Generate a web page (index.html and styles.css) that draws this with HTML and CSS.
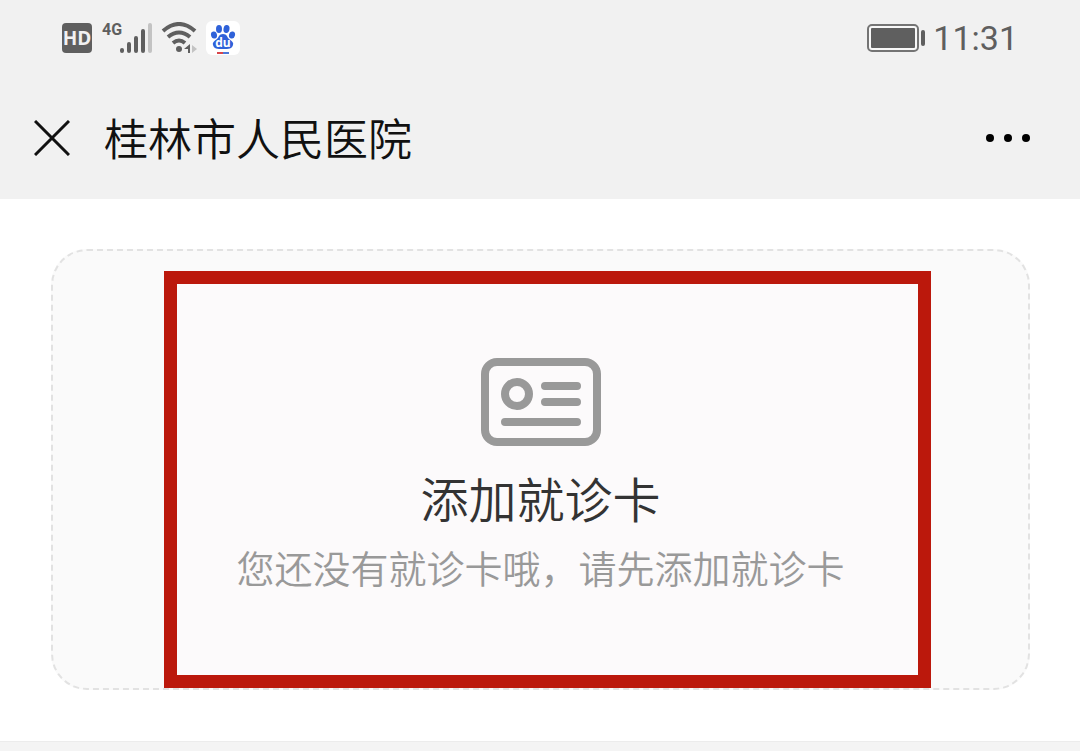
FILE: index.html
```html
<!DOCTYPE html>
<html lang="zh-CN">
<head>
    <meta charset="UTF-8">
    <meta name="viewport" content="width=device-width, initial-scale=1.0">
    <title>桂林市人民医院</title>
    <link rel="stylesheet" href="styles.css">
</head>
<body>
    <header class="header">
        <div class="status-bar">
            <div class="status-left">
                <span class="hd">HD</span>
                <div class="signal">
                    <span class="network">4G</span>
                    <svg width="34" height="32" viewBox="0 0 34 32" fill="none" stroke="#5f5f5f" stroke-width="4" stroke-linecap="round" aria-hidden="true">
                        <path d="M4 28v1M11 22v7M18 16v13M25 9v20"/>
                        <path d="M32 3v26" stroke="#c3c3c3"/>
                    </svg>
                </div>
                <svg class="wifi" width="38" height="32" viewBox="0 0 38 32" fill="none" stroke="#5f5f5f" stroke-width="4" stroke-linecap="round" aria-hidden="true">
                    <path d="M3 9Q19-5 35 9M8 15Q19 6 30 15M13 21Q19 16 25 21" stroke-linecap="butt"/>
                    <circle cx="19" cy="27" r="3" fill="#5f5f5f" stroke="none"/>
                    <path d="M24 27l6-5v9h-2v-4z" fill="#5f5f5f" stroke="none"/>
                    <path d="M32 23l5 4-5 4z" fill="#c3c3c3" stroke="none"/>
                </svg>
                <svg class="baidu" width="34" height="34" viewBox="0 0 34 34" aria-hidden="true">
                    <rect width="34" height="34" rx="6" fill="#fff"/>
                    <g fill="#2f62d9">
                        <ellipse cx="8" cy="14" rx="3" ry="3.600" transform="rotate(-12 8 14)"/>
                        <ellipse cx="13" cy="8" rx="3" ry="4"/>
                        <ellipse cx="20.500" cy="8" rx="3" ry="4" transform="rotate(10 20.500 8)"/>
                        <ellipse cx="26" cy="14" rx="3" ry="3.600" transform="rotate(15 26 14)"/>
                        <path d="M17 13c4 0 4 3 6 5 3 2 5 4 4 6-1 4-4 4-10 4s-9 0-10-4c-1-2 1-4 4-6 2-2 2-5 6-5z"/>
                    </g>
                    <text x="17" y="26" class="baidu-text">du</text>
                    <path d="M11 32h6" stroke="#d8464b" stroke-width="2"/>
                    <path d="M17 32h6" stroke="#4c78d8" stroke-width="2"/>
                </svg>
            </div>
            <div class="status-right">
                <svg width="58" height="28" viewBox="0 0 58 28" aria-hidden="true">
                    <rect x="1" y="1" width="50" height="26" rx="4" fill="#f8f8f8" stroke="#747474" stroke-width="2"/>
                    <rect x="4" y="4" width="44" height="20" rx="1" fill="#5f5f5f"/>
                    <rect x="54" y="6" width="4" height="16" rx="2" fill="#5f5f5f"/>
                </svg>
                <time>11:31</time>
            </div>
        </div>
        <nav class="nav-bar">
            <button class="icon-btn" type="button" aria-label="关闭">
                <svg width="36" height="36" viewBox="0 0 36 36" stroke="#111" stroke-width="3" aria-hidden="true">
                    <path d="M1 1l34 34M35 1L1 35"/>
                </svg>
            </button>
            <h1>桂林市人民医院</h1>
            <button class="icon-btn" type="button" aria-label="更多">
                <svg width="46" height="10" viewBox="0 0 46 10" aria-hidden="true">
                    <circle cx="5" cy="5" r="4"/>
                    <circle cx="23" cy="5" r="4"/>
                    <circle cx="41" cy="5" r="4"/>
                </svg>
            </button>
        </nav>
    </header>

    <main class="content">
        <button class="add-card" type="button">
            <span class="highlight"></span>
            <svg class="card-icon" width="120" height="88" viewBox="0 0 120 88" fill="none" stroke="#999" stroke-width="8" stroke-linecap="round" aria-hidden="true">
                <rect x="4" y="4" width="112" height="80" rx="12"/>
                <circle cx="36" cy="36" r="12"/>
                <path d="M64 28h32M64 44h32M24 64h72"/>
            </svg>
            <span class="card-title">添加就诊卡</span>
            <span class="card-tip">您还没有就诊卡哦，请先添加就诊卡</span>
        </button>
    </main>
    <div class="divider"></div>
</body>
</html>
```
FILE: styles.css
```css
* {
    box-sizing: border-box;
}
body {
    margin: 0;
    min-height: 100vh;
    display: flex;
    flex-direction: column;
    background-color: #fff;
    font-family: Roboto, "Noto Sans CJK SC", sans-serif;
}
button {
    font-family: inherit;
    cursor: pointer;
}
svg {
    display: block;
}
.header {
    background-color: #f1f1f1;
}
.status-bar {
    display: flex;
    justify-content: space-between;
    align-items: center;
    height: 76px;
    padding: 0 62px;
    color: #5f5f5f;
}
.status-left,
.status-right {
    display: flex;
    align-items: center;
}
.hd {
    width: 30px;
    border-radius: 4px;
    background-color: #5f5f5f;
    color: #f1f1f1;
    font-family: "Open Sans", sans-serif;
    font-size: 19px;
    font-weight: bold;
    line-height: 30px;
    text-align: center;
}
.signal {
    display: flex;
    margin-left: 10px;
}
.network {
    width: 16px;
    font-size: 16px;
    font-weight: bold;
    line-height: 16px;
}
.wifi,
.baidu {
    margin-left: 8px;
}
.baidu-text {
    fill: #fff;
    font-family: "Open Sans", sans-serif;
    font-size: 12px;
    font-weight: bold;
    text-anchor: middle;
}
.status-right {
    gap: 8px;
    font-size: 34px;
    line-height: 40px;
}
.nav-bar {
    display: flex;
    align-items: center;
    gap: 34px;
    height: 123px;
    padding: 0 49px 0 34px;
}
.nav-bar h1 {
    flex: 1;
    margin: 0;
    padding-top: 6px;
    color: #111;
    font-size: 44px;
    font-weight: 350;
    line-height: 64px;
}
.icon-btn {
    padding: 0;
    border: none;
    background: none;
}
.content {
    flex: 1;
    padding: 50px 50px 50px 51px;
}
.add-card {
    position: relative;
    display: flex;
    flex-direction: column;
    align-items: center;
    width: 100%;
    padding: 107px 0 86px;
    border: 2px dashed #e2e2e2;
    border-radius: 36px;
    background-color: #fafafa;
}
.highlight {
    position: absolute;
    top: 20px;
    right: 97px;
    bottom: 0;
    left: 111px;
    border: 13px solid #bb180c;
    background-color: #fcfafb;
}
.card-icon,
.card-title,
.card-tip {
    position: relative;
}
.card-title {
    margin-top: 20px;
    color: #333;
    font-size: 48px;
    font-weight: 350;
    line-height: 72px;
}
.card-tip {
    color: #999;
    font-size: 38px;
    font-weight: 350;
    line-height: 64px;
}
.divider {
    height: 10px;
    border-top: 1px solid #ececec;
    background-color: #f4f4f4;
}
```
